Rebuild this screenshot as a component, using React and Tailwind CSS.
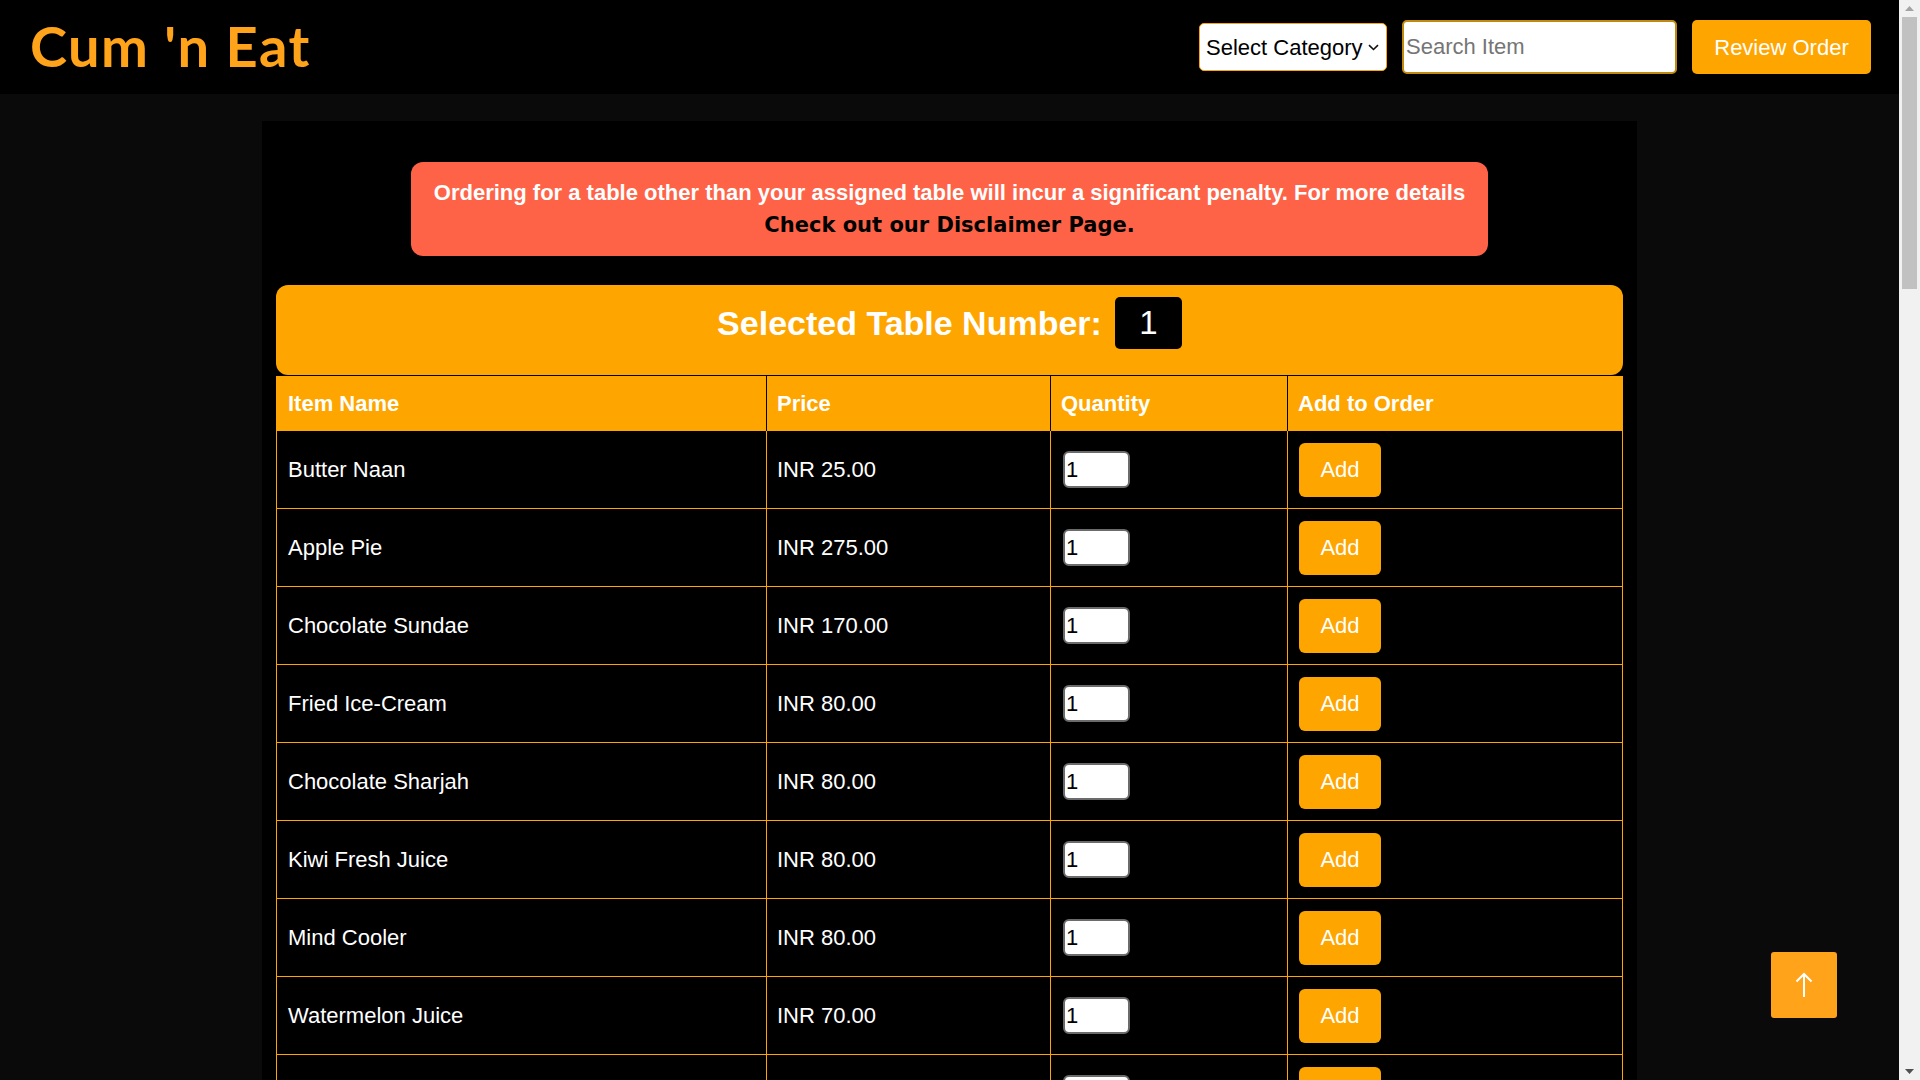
import React from "react";

const items = [
  ["Butter Naan", "25.00"],
  ["Apple Pie", "275.00"],
  ["Chocolate Sundae", "170.00"],
  ["Fried Ice-Cream", "80.00"],
  ["Chocolate Sharjah", "80.00"],
  ["Kiwi Fresh Juice", "80.00"],
  ["Mind Cooler", "80.00"],
  ["Watermelon Juice", "70.00"],
  ["Mango Lassi", "90.00"],
  ["Sweet Lime Soda", "60.00"],
  ["Cold Coffee", "110.00"],
  ["Paneer Tikka", "220.00"],
  ["Veg Manchurian", "180.00"],
  ["Chicken 65", "240.00"],
  ["Gobi Manchurian", "160.00"],
  ["Crispy Corn", "150.00"],
  ["Veg Spring Roll", "140.00"],
  ["Tomato Soup", "90.00"],
  ["Sweet Corn Soup", "100.00"],
  ["Hot & Sour Soup", "110.00"],
  ["Dal Makhani", "190.00"],
  ["Paneer Butter Masala", "230.00"],
  ["Kadai Paneer", "230.00"],
  ["Butter Chicken", "280.00"],
  ["Chicken Tikka Masala", "290.00"],
  ["Mutton Rogan Josh", "340.00"],
  ["Veg Biryani", "200.00"],
  ["Chicken Biryani", "260.00"],
  ["Mutton Biryani", "320.00"],
  ["Jeera Rice", "120.00"],
  ["Steamed Rice", "90.00"],
  ["Tandoori Roti", "20.00"],
  ["Garlic Naan", "45.00"],
  ["Laccha Paratha", "40.00"],
  ["Veg Fried Rice", "170.00"],
  ["Hakka Noodles", "170.00"],
  ["Schezwan Noodles", "180.00"],
  ["Gulab Jamun", "60.00"],
  ["Rasmalai", "90.00"],
  ["Brownie with Ice-Cream", "150.00"],
  ["Vanilla Ice-Cream", "70.00"],
  ["Fresh Lime Water", "50.00"],
  ["Masala Chaas", "50.00"],
  ["Oreo Shake", "140.00"],
  ["Mineral Water", "20.00"],
  ["Green Salad", "80.00"],
];

function Row({ name, price }) {
  return (
    <div className="flex h-[78px] border-b border-[#ffa500] text-[22px] text-white">
      <div className="w-[490px] shrink-0 border-r border-[#ffa500] pl-[11px] flex items-center">{name}</div>
      <div className="w-[284px] shrink-0 border-r border-[#ffa500] pl-[10px] flex items-center">INR {price}</div>
      <div className="w-[237px] shrink-0 border-r border-[#ffa500] pl-[12px] flex items-center">
        <input
          type="number"
          defaultValue="1"
          className="w-[67px] h-[37px] bg-white text-black text-[22px] rounded-[6px] border-2 border-[#6b6b6b] pl-[1px] outline-none [appearance:textfield]"
        />
      </div>
      <div className="flex-1 pl-[11px] flex items-center">
        <button className="w-[82px] h-[54px] bg-[#ffa500] text-white text-[22px] rounded-[6px]">Add</button>
      </div>
    </div>
  );
}

export default function App() {
  return (
    <div className="min-h-screen bg-[#0a0a0a] font-['Liberation_Sans',Arial,sans-serif]">
      <div className="mr-[21px] pb-[40px]">
        <header className="h-[94px] bg-black flex items-center justify-between pl-[30px] pr-[28px]">
          <h1 className="font-['Lato',sans-serif] text-[56px] font-bold leading-none tracking-[1.4px] text-[#ffa31a] -mt-[2px]">
            Cum 'n Eat
          </h1>
          <div className="flex items-center">
            <div className="w-[188px] h-[48px] bg-white border border-[#ffa500] rounded-[5px] flex items-center justify-between pl-[6px] pr-[7px] text-[22px] text-black">
              <span>Select Category</span>
              <svg width="11" height="7" viewBox="0 0 11 7" fill="none">
                <path d="M1 1.2 L5.5 5.5 L10 1.2" stroke="#111" strokeWidth="1.6" />
              </svg>
            </div>
            <input
              type="text"
              placeholder="Search Item"
              className="ml-[15px] w-[275px] h-[54px] bg-white border-2 border-[#c08a10] rounded-[5px] pl-[2px] text-[22px] text-black placeholder:text-[#757575] outline-none"
            />
            <button className="ml-[15px] w-[179px] h-[54px] bg-[#ffa500] rounded-[5px] text-white text-[22px]">
              Review Order
            </button>
          </div>
        </header>

        <main className="w-[1375px] mx-auto mt-[27px] bg-black px-[14px] pt-[41px] pb-[30px]">
          <div className="w-[80%] mx-auto bg-[#ff6347] rounded-[12px] py-[14px] text-center font-bold leading-[33px]">
            <p className="text-white text-[22px]">
              Ordering for a table other than your assigned table will incur a significant penalty. For more details
            </p>
            <p className="text-black font-['DejaVu_Sans',Verdana,sans-serif] text-[21px]">Check out our Disclaimer Page.</p>
          </div>

          <div className="mt-[29px] h-[90px] bg-[#ffa500] rounded-[12px] flex justify-center pt-[12px]">
            <div className="flex items-center gap-[13px] h-[52px]">
              <span className="text-white font-bold text-[34px]">Selected Table Number:</span>
              <span className="w-[67px] h-[52px] bg-black rounded-[5px] text-white text-[33px] flex items-center justify-center">
                1
              </span>
            </div>
          </div>

          <div className="mt-[1px] border-x border-[#ffa500]">
            <div className="flex h-[55px] bg-[#ffa500] text-white font-bold text-[22px] -mx-px">
              <div className="w-[491px] shrink-0 border-r border-black pl-[12px] flex items-center">Item Name</div>
              <div className="w-[284px] shrink-0 border-r border-black pl-[10px] flex items-center">Price</div>
              <div className="w-[237px] shrink-0 border-r border-black pl-[10px] flex items-center">Quantity</div>
              <div className="flex-1 pl-[10px] flex items-center">Add to Order</div>
            </div>
            {items.map(([n, p]) => (
              <Row key={n} name={n} price={p} />
            ))}
          </div>
        </main>
      </div>

      <button className="fixed right-[83px] bottom-[62px] w-[66px] h-[66px] bg-[#ffa31a] rounded-[3px] flex items-center justify-center">
        <svg width="20" height="28" viewBox="0 0 20 28" fill="none">
          <path d="M10 26 V3 M2.5 10.5 L10 3 L17.5 10.5" stroke="white" strokeWidth="2" />
        </svg>
      </button>

      <div className="fixed top-0 right-0 w-[21px] h-screen bg-[#f1f1f1] flex flex-col items-center">
        <div className="h-[17px] w-full flex items-center justify-center">
          <svg width="9" height="5" viewBox="0 0 9 5"><path d="M0 5 L4.5 0 L9 5 Z" fill="#a3a3a3" /></svg>
        </div>
        <div className="w-[15px] h-[272px] bg-[#c1c1c1]" />
        <div className="flex-1" />
        <div className="h-[17px] w-full flex items-center justify-center">
          <svg width="9" height="5" viewBox="0 0 9 5"><path d="M0 0 L9 0 L4.5 5 Z" fill="#505050" /></svg>
        </div>
      </div>
    </div>
  );
}
